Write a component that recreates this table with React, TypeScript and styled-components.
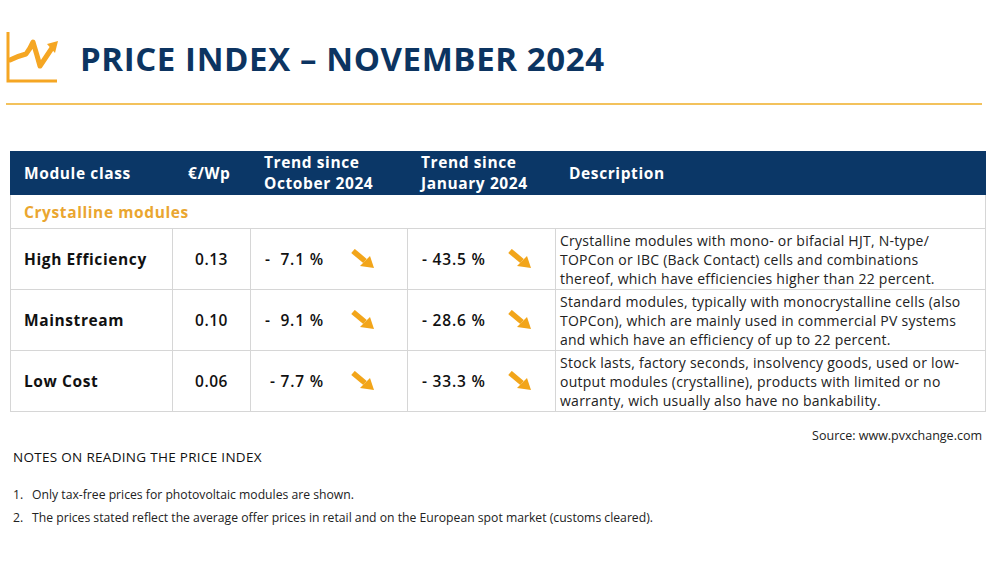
import styled, { createGlobalStyle } from "styled-components";

const GlobalStyle = createGlobalStyle`
  html, body {
    margin: 0;
    padding: 0;
    background: #ffffff;
  }
  body {
    font-family: "Open Sans", "Liberation Sans", sans-serif;
    color: #111;
  }
`;

interface RowData {
  name: string;
  price: string;
  month: string;
  year: string;
  monthIndent?: boolean;
  lines: string[];
}

const rows: RowData[] = [
  {
    name: "High Efficiency",
    price: "0.13",
    month: "-\u00a0 7.1 %",
    year: "- 43.5 %",
    lines: [
      "Crystalline modules with mono- or bifacial HJT, N-type/",
      "TOPCon or IBC (Back Contact) cells and combinations",
      "thereof, which have efficiencies higher than 22 percent.",
    ],
  },
  {
    name: "Mainstream",
    price: "0.10",
    month: "-\u00a0 9.1 %",
    year: "- 28.6 %",
    lines: [
      "Standard modules, typically with monocrystalline cells (also",
      "TOPCon), which are mainly used in commercial PV systems",
      "and which have an efficiency of up to 22 percent.",
    ],
  },
  {
    name: "Low Cost",
    price: "0.06",
    month: "- 7.7 %",
    year: "- 33.3 %",
    monthIndent: true,
    lines: [
      "Stock lasts, factory seconds, insolvency goods, used or low-",
      "output modules (crystalline), products with limited or no",
      "warranty, wich usually also have no bankability.",
    ],
  },
];

function Logo() {
  return (
    <svg width="52" height="52" viewBox="0 0 52 52" fill="none">
      <path d="M2 1 V50 H51" stroke="#f5a623" strokeWidth="3" />
      <path
        d="M4 29 Q12 25 20 23 Q24 18 27 11 Q31 24 34 35 Q40 26 46 17"
        stroke="#f5a623"
        strokeWidth="5"
        strokeLinejoin="round"
        strokeLinecap="round"
      />
      <polygon points="52,10 41,13 49,22" fill="#f5a623" />
    </svg>
  );
}

function DownArrow() {
  return (
    <svg width="24" height="20" viewBox="0 0 24 20">
      <line x1="2" y1="2" x2="14" y2="12" stroke="#f2a51a" strokeWidth="5.5" />
      <polygon points="23,19 9,17 19,7" fill="#f2a51a" />
    </svg>
  );
}

export default function App() {
  return (
    <Page>
      <GlobalStyle />
      <TitleBar>
        <Logo />
        <Title>PRICE INDEX – NOVEMBER 2024</Title>
      </TitleBar>
      <Rule />
      <Table>
        <colgroup>
          <col style={{ width: 162 }} />
          <col style={{ width: 78 }} />
          <col style={{ width: 157 }} />
          <col style={{ width: 148 }} />
          <col style={{ width: 430 }} />
        </colgroup>
        <thead>
          <tr>
            <HeadCell>Module class</HeadCell>
            <HeadCell $center>€/Wp</HeadCell>
            <HeadCell>
              Trend since
              <br />
              October 2024
            </HeadCell>
            <HeadCell>
              Trend since
              <br />
              January 2024
            </HeadCell>
            <HeadCell>Description</HeadCell>
          </tr>
        </thead>
        <tbody>
          <tr>
            <GroupCell colSpan={5}>Crystalline modules</GroupCell>
          </tr>
          {rows.map((r) => (
            <tr key={r.name}>
              <NameCell>{r.name}</NameCell>
              <PriceCell>{r.price}</PriceCell>
              <TrendCell>
                <Trend>
                  <TrendValue $indent={r.monthIndent}>{r.month}</TrendValue>
                  <DownArrow />
                </Trend>
              </TrendCell>
              <TrendCell>
                <Trend>
                  <TrendValue>{r.year}</TrendValue>
                  <DownArrow />
                </Trend>
              </TrendCell>
              <DescCell>
                {r.lines.map((l) => (
                  <DescLine key={l}>{l}</DescLine>
                ))}
              </DescCell>
            </tr>
          ))}
        </tbody>
      </Table>
      <Source>Source: www.pvxchange.com</Source>
      <NotesTitle>NOTES ON READING THE PRICE INDEX</NotesTitle>
      <Notes>
        <Note>
          <NoteNum>1.</NoteNum>
          Only tax-free prices for photovoltaic modules are shown.
        </Note>
        <Note>
          <NoteNum>2.</NoteNum>
          The prices stated reflect the average offer prices in retail and on the European spot market (customs cleared).
        </Note>
      </Notes>
    </Page>
  );
}

const Page = styled.div`
  width: 1000px;
  height: 563px;
  overflow: hidden;
  padding-top: 31px;
  box-sizing: border-box;
`;

const TitleBar = styled.div`
  display: flex;
  align-items: center;
  gap: 22px;
  padding-left: 6px;
  height: 52px;
`;

const Title = styled.h1`
  margin: 0;
  font-family: "Open Sans", "Liberation Sans", sans-serif;
  font-weight: 700;
  font-size: 33px;
  letter-spacing: 0.6px;
  color: #0c3461;
  line-height: 1;
  padding-top: 3px;
`;

const Rule = styled.div`
  margin: 20px 0 0 6px;
  width: 976px;
  height: 2px;
  background: #f3c25c;
`;

const Table = styled.table`
  margin: 46px 0 0 10px;
  width: 975px;
  table-layout: fixed;
  border-collapse: collapse;
  font-family: "Open Sans", "Liberation Sans", sans-serif;
`;

const HeadCell = styled.th<{ $center?: boolean }>`
  background: #0b3767;
  color: #ffffff;
  font-weight: 700;
  font-size: 15.5px;
  line-height: 21px;
  height: 41px;
  padding: 0 0 0 ${(p) => (p.$center ? "15px" : "13px")};
  text-align: left;
  vertical-align: middle;
  border: 1px solid #0b3767;
  letter-spacing: 0.6px;
  box-sizing: border-box;
`;

const GroupCell = styled.td`
  height: 33px;
  padding: 0 0 0 13px;
  color: #eaa630;
  font-weight: 700;
  font-size: 15.5px;
  line-height: 20px;
  border: 1px solid #d6d6d6;
  border-top: none;
  vertical-align: middle;
  letter-spacing: 0.6px;
`;

const Cell = styled.td`
  height: 60px;
  border: 1px solid #d6d6d6;
  vertical-align: middle;
  padding: 0;
  font-size: 15.5px;
`;

const NameCell = styled(Cell)`
  padding-left: 13px;
  font-weight: 700;
  color: #111;
  letter-spacing: 0.6px;
`;

const PriceCell = styled(Cell)`
  text-align: center;
  font-weight: 600;
  color: #111;
  letter-spacing: 0.5px;
`;

const TrendCell = styled(Cell)`
  padding-left: 14px;
`;

const Trend = styled.div`
  display: flex;
  align-items: center;
`;

const TrendValue = styled.span<{ $indent?: boolean }>`
  width: 86px;
  padding-left: ${(p) => (p.$indent ? "5px" : "0")};
  box-sizing: border-box;
  font-weight: 600;
  font-size: 15.5px;
  letter-spacing: 0.8px;
  color: #111;
  white-space: pre;
`;

const DescCell = styled(Cell)`
  padding-left: 4px;
  font-size: 14px;
  line-height: 19px;
  letter-spacing: 0.25px;
  color: #222;
`;

const DescLine = styled.div`
  white-space: nowrap;
`;

const Source = styled.div`
  width: 982px;
  text-align: right;
  margin-top: 15px;
  font-size: 12.5px;
  color: #222;
`;

const NotesTitle = styled.div`
  margin: 4px 0 0 13px;
  font-size: 13.5px;
  color: #111;
  letter-spacing: 0.3px;
`;

const Notes = styled.ol`
  list-style: none;
  margin: 20px 0 0 13px;
  padding: 0;
  display: flex;
  flex-direction: column;
  gap: 5px;
`;

const Note = styled.li`
  display: flex;
  font-size: 12.2px;
  line-height: 18px;
  color: #222;
`;

const NoteNum = styled.span`
  width: 19px;
  flex-shrink: 0;
`;
